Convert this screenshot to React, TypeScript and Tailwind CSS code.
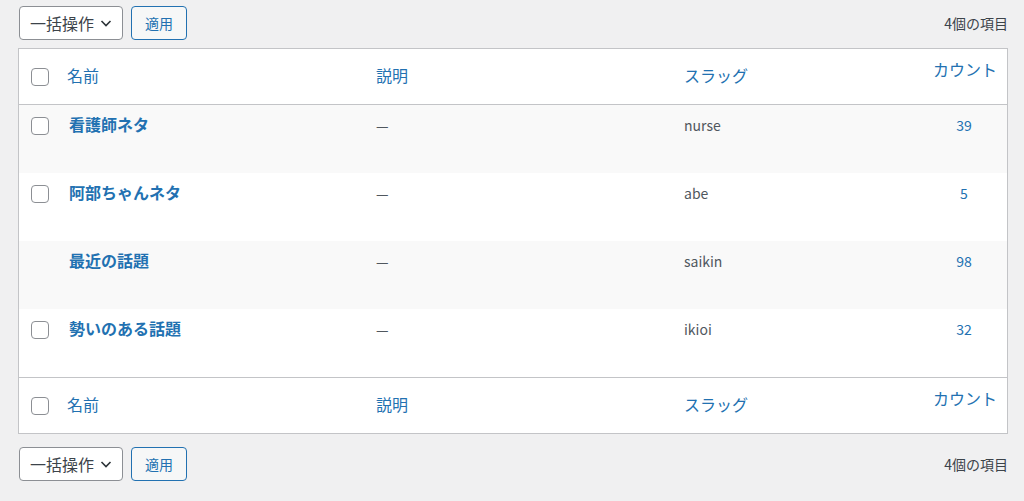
import React from "react";

const font = { fontFamily: '"Noto Sans CJK JP", "Noto Sans", sans-serif' };

function Box() {
  return <span className="block w-[18px] h-[18px] rounded-[4px] border border-[#8c8f94] bg-white" />;
}

function Toolbar() {
  return (
    <div className="flex items-center h-[34px] pl-[19px] pr-[16px]">
      <div className="flex items-center h-[34px] w-[104px] border border-[#8c8f94] rounded-[4px] bg-white pl-[10px] pr-[8px] text-[16px] text-[#3c434a]">
        <span>一括操作</span>
        <svg className="ml-[5px]" width="14" height="14" viewBox="0 0 14 14" fill="none">
          <path d="M2.5 5l4.5 4.5 4.5-4.5" stroke="#2c3338" strokeWidth="1.6" />
        </svg>
      </div>
      <div className="ml-[8px] flex items-center justify-center h-[34px] w-[56px] border border-[#2271b1] rounded-[4px] bg-[#f6f7f7] text-[14px] text-[#2271b1]">
        適用
      </div>
      <div className="ml-auto text-[14px] text-[#3c434a]">4個の項目</div>
    </div>
  );
}

function HeaderRow({ top }: { top?: boolean }) {
  return (
    <div className={`grid grid-cols-[38px_309px_308px_247px_86px] h-[56px] items-center text-[16px] text-[#2271b1] ${top ? "border-b" : "border-t"} border-[#c3c4c7]`}>
      <div className="pl-[12px]"><Box /></div>
      <div className="pl-[10px] -mt-[3px]">名前</div>
      <div className="pl-[10px] -mt-[3px]">説明</div>
      <div className="pl-[10px] -mt-[3px]">スラッグ</div>
      <div className="pr-[10px] text-right -mt-[15px]">カウント</div>
    </div>
  );
}

const rows = [
  { name: "看護師ネタ", slug: "nurse", count: "39", cb: true },
  { name: "阿部ちゃんネタ", slug: "abe", count: "5", cb: true },
  { name: "最近の話題", slug: "saikin", count: "98", cb: false },
  { name: "勢いのある話題", slug: "ikioi", count: "32", cb: true },
];

export default function App() {
  return (
    <div className="w-[1024px] h-[501px] bg-[#f0f0f1] pt-[6px] overflow-hidden" style={font}>
      <Toolbar />
      <div className="ml-[18px] mt-[8px] w-[990px] border border-[#c3c4c7] bg-white">
        <HeaderRow top />
        {rows.map((r, i) => (
          <div key={i} className={`grid grid-cols-[38px_309px_308px_247px_86px] h-[68px] pt-[10px] ${i % 2 === 0 ? "bg-[#f9f9f9]" : "bg-white"}`}>
            <div className="pl-[12px] pt-[2px]">{r.cb && <Box />}</div>
            <div className="pl-[12px] text-[16px] font-bold text-[#2271b1] leading-[20px] -mt-[1px]">{r.name}</div>
            <div className="pl-[10px] text-[14px] text-[#50575e] leading-[20px]">—</div>
            <div className="pl-[10px] text-[14px] text-[#50575e] leading-[20px]">{r.slug}</div>
            <div className="text-center text-[14px] text-[#2271b1] leading-[20px]">{r.count}</div>
          </div>
        ))}
        <HeaderRow />
      </div>
      <div className="mt-[13px]">
        <Toolbar />
      </div>
    </div>
  );
}
